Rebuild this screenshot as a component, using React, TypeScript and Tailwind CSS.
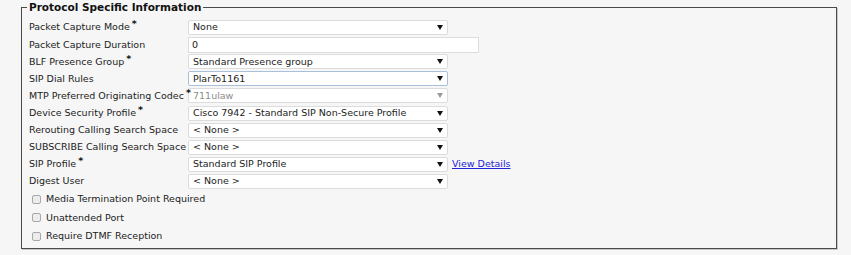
import React from "react";

type Row = {
    label: string
    required?: boolean
    value: string
    kind: "select" | "input"
    disabled?: boolean
    focused?: boolean
    link?: string
}

const rows: Row[] = [
    { label: "Packet Capture Mode", required: true, value: "None", kind: "select" },
    { label: "Packet Capture Duration", value: "0", kind: "input" },
    { label: "BLF Presence Group", required: true, value: "Standard Presence group", kind: "select" },
    { label: "SIP Dial Rules", value: "PlarTo1161", kind: "select", focused: true },
    { label: "MTP Preferred Originating Codec", required: true, value: "711ulaw", kind: "select", disabled: true },
    { label: "Device Security Profile", required: true, value: "Cisco 7942 - Standard SIP Non-Secure Profile", kind: "select" },
    { label: "Rerouting Calling Search Space", value: "< None >", kind: "select" },
    { label: "SUBSCRIBE Calling Search Space", value: "< None >", kind: "select" },
    { label: "SIP Profile", required: true, value: "Standard SIP Profile", kind: "select", link: "View Details" },
    { label: "Digest User", value: "< None >", kind: "select" },
]

const checks = ["Media Termination Point Required", "Unattended Port", "Require DTMF Reception"]

function Arrow({ disabled }: { disabled?: boolean }) {
    return (
        <svg width="6" height="5" viewBox="0 0 6 5" className="shrink-0">
            <polygon points="0,0 6,0 3,5" fill={disabled ? "#9a9a9a" : "#111"} />
        </svg>
    )
}

function Field({ row }: { row: Row }) {
    if (row.kind === "input") {
        return (
            <div className="h-[16px] w-[291px] border border-[#dcdcdc] bg-white pl-[3px] flex items-center text-[#222]">
                {row.value}
            </div>
        )
    }
    const border = row.focused ? "border-[#a9bfdc]" : "border-[#dcdcdc]"
    const text = row.disabled ? "text-[#8c8c8c]" : "text-[#222]"
    return (
        <div className={`h-[15px] w-[260px] border ${border} rounded-[2px] bg-white pl-[4px] pr-[4px] flex items-center justify-between ${text}`}>
            <span>{row.value}</span>
            <Arrow disabled={row.disabled} />
        </div>
    )
}

export default function App() {
    return (
        <div className="w-[851px] h-[255px] bg-[#f6f6f6] pt-[1px] font-['DejaVu_Sans',sans-serif] text-[9.5px] text-[#222]">
            <fieldset className="ml-[21px] w-[816px] h-[248px] border border-[#4a4a4a] shadow-[1px_1px_0_#c8c8c8] pl-[7px] pb-[4px]">
                <legend className="ml-[-2px] px-[2px] font-bold text-[10.5px] text-[#111] leading-[13px]">
                    Protocol Specific Information
                </legend>
                <div className="pt-[5px] flex flex-col">
                    {rows.map((row) => (
                        <div key={row.label} className="h-[17.1px] flex items-center">
                            <div className="w-[159px] shrink-0 whitespace-nowrap">
                                {row.label}
                                {row.required && (
                                    <span className="ml-[2px] font-bold text-[#111] relative top-[-3px]">*</span>
                                )}
                            </div>
                            <Field row={row} />
                            {row.link && (
                                <a className="ml-[4px] text-[#2323d8] underline cursor-pointer">{row.link}</a>
                            )}
                        </div>
                    ))}
                    <div className="flex flex-col">
                        {checks.map((c) => (
                            <div key={c} className="h-[18.5px] flex items-center pl-[3px]">
                                <span className="w-[9px] h-[9px] rounded-[2px] border border-[#a8a8a8] bg-[#ececec] mr-[5px]" />
                                <span>{c}</span>
                            </div>
                        ))}
                    </div>
                </div>
            </fieldset>
        </div>
    )
}
